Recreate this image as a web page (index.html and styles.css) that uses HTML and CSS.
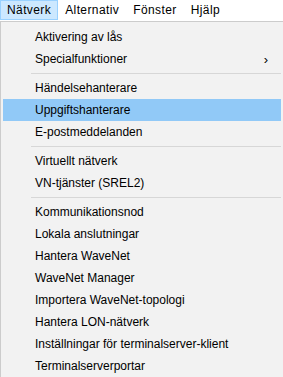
FILE: index.html
```html
<!DOCTYPE html>
<html lang="sv">
<head>
<meta charset="utf-8">
<link rel="stylesheet" href="styles.css">
</head>
<body>
<div class="menubar">
  <span class="top active">Nätverk</span>
  <span class="top">Alternativ</span>
  <span class="top">Fönster</span>
  <span class="top">Hjälp</span>
</div>
<div class="dropdown">
  <div class="item">Aktivering av lås</div>
  <div class="item sub">Specialfunktioner<span class="chev">›</span></div>
  <div class="sep"></div>
  <div class="item">Händelsehanterare</div>
  <div class="item hl">Uppgiftshanterare</div>
  <div class="item">E-postmeddelanden</div>
  <div class="sep"></div>
  <div class="item">Virtuellt nätverk</div>
  <div class="item">VN-tjänster (SREL2)</div>
  <div class="sep"></div>
  <div class="item">Kommunikationsnod</div>
  <div class="item">Lokala anslutningar</div>
  <div class="item">Hantera WaveNet</div>
  <div class="item">WaveNet Manager</div>
  <div class="item">Importera WaveNet-topologi</div>
  <div class="item">Hantera LON-nätverk</div>
  <div class="item">Inställningar för terminalserver-klient</div>
  <div class="item">Terminalserverportar</div>
</div>
</body>
</html>
```
FILE: styles.css
```css
html, body {
  margin: 0;
  padding: 0;
  background: #ffffff;
}
body {
  font-family: "Liberation Sans", Arial, sans-serif;
  font-size: 12px;
  color: #000;
  width: 283px;
  height: 377px;
  overflow: hidden;
}
.menubar {
  display: flex;
  height: 20px;
  background: #ffffff;
}
.top {
  display: flex;
  align-items: center;
  padding: 0 6px;
  border: 1px solid transparent;
  line-height: 18px;
  letter-spacing: 0.4px;
}
.top.active {
  background: #cce8ff;
  border-color: #99d1ff;
}
.dropdown {
  background: #f2f2f2;
  border: 1px solid #cccccc;
  border-right: none;
  border-bottom: none;
  margin-top: 1px;
  padding: 4px 2px 0 2px;
  height: 355px;
  overflow: hidden;
}
.item {
  display: flex;
  align-items: center;
  height: 22px;
  padding-left: 32px;
  flex-shrink: 0;
}
.item.hl {
  background: #91c9f7;
}
.chev {
  margin-left: auto;
  margin-right: 13px;
  font-size: 13px;
}
.sep {
  height: 1px;
  background: #d7d7d7;
  margin: 3px 0 3px 28px;
}
```
